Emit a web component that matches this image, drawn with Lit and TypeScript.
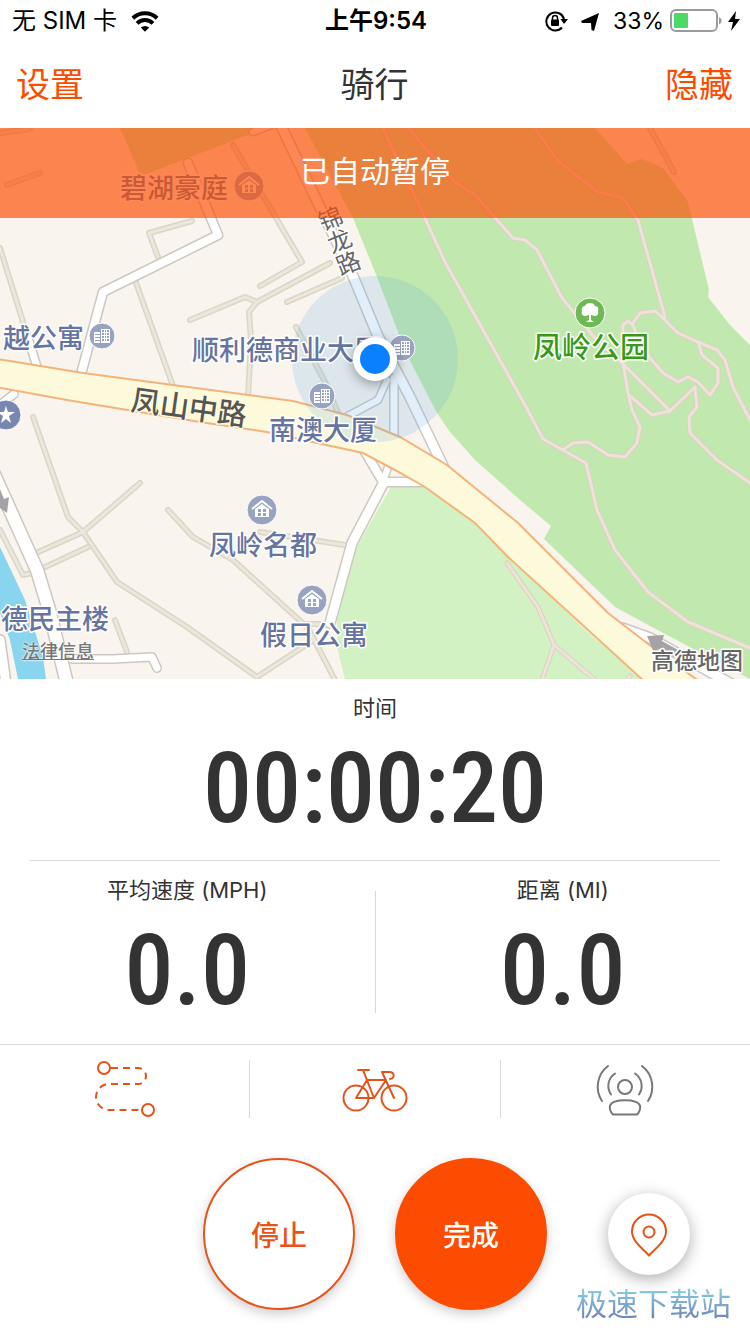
import { LitElement, html, svg, css } from "lit";
import { customElement } from "lit/decorators.js";

const sans = css`Inter, "Noto Sans CJK SC", sans-serif`;

const minorRoads = [
  "192,221 149,233 158,257",
  "135,280 173,386",
  "233,145 302,262 260,286",
  "190,320 245,297 257,302 330,263",
  "257,302 249,312 251,340 248,398",
  "287,302 342,278",
  "296,327 325,382 338,413",
  "40,173 7,185",
  "0,133 30,129",
  "0,248 28,338",
  "33,417 68,517 83,532 117,582 187,627 257,677",
  "140,483 83,532 36,553",
  "88,547 43,568",
  "168,510 193,537 233,560 308,628 335,680",
  "260,532 345,545",
  "115,620 127,652",
  "257,677 312,641",
  "0,530 23,575 36,572",
  "303,624 328,624",
  "650,128 674,172",
];

const whiteRoads = [
  { w: 11, p: "188,163 218,235 103,292 80,378" },
  { w: 12, p: "282,128 353,276 377,334 410,397 444,468" },
  { w: 9, p: "253,132 284,120" },
  { w: 10, p: "394,378 394,440" },
  { w: 9, p: "387,380 378,400 348,416" },
  { w: 11, p: "364,450 383,482 428,482" },
  { w: 9, p: "389,464 383,482" },
  { w: 12, p: "384,482 352,543 330,623" },
  { w: 15, p: "-8,470 37,570 50,613 67,684" },
  { w: 10, p: "28,338 38,370" },
  { w: 10, p: "72,659 113,659 152,657 157,668" },
  { w: 10, p: "0,405 14,394" },
  { w: 12, p: "0,640 6,684" },
  { w: 12, p: "622,628 650,638 735,686" },
];

const parkPaths = [
  "383,128 413,192 445,262 525,405 543,439 586,463 597,510 615,550 648,592 688,622 750,648",
  "408,128 455,182 475,195 513,238 525,240 537,250 562,298 595,338 622,363 670,411 695,387",
  "535,128 557,160 598,192 623,198 638,220 665,317",
  "633,323 640,313 655,311 665,320 678,333 698,342 717,350 725,360 733,387 750,420",
  "623,362 623,325 628,321 633,325 640,343 650,358 663,373 678,382 688,377 698,382 710,395 718,383 718,368 702,355 698,342",
  "623,362 628,393 632,410 640,427 637,443 625,457 608,455 588,442 573,443 563,450",
  "629,395 652,415 670,411",
  "695,387 697,407 689,417 690,433 717,460 750,483",
  "507,563 538,607 554,645 595,680",
  "554,645 542,680",
  "630,676 624,684",
];

const houses = [
  [249, 186],
  [262, 510],
  [312, 600],
];
const buildings = [
  [102, 336],
  [402, 348],
  [322, 396],
];

const labels = [
  { x: 3, y: 348, t: "越公寓" },
  { x: 120, y: 198, t: "碧湖豪庭" },
  { x: 192, y: 360, t: "顺利德商业大厦" },
  { x: 269, y: 440, t: "南澳大厦" },
  { x: 209, y: 555, t: "凤岭名都" },
  { x: 260, y: 645, t: "假日公寓" },
  { x: 1, y: 629, t: "德民主楼" },
];

const lines = (list: string[], cls: string) =>
  list.map((p) => svg`<polyline class=${cls} points=${p} />`);

@customElement("ride-map")
class RideMap extends LitElement {
  static styles = css`
    :host {
      display: block;
      position: relative;
    }
    svg {
      display: block;
      width: 100%;
      height: auto;
    }
    polyline {
      fill: none;
      stroke-linecap: round;
      stroke-linejoin: round;
    }
    .land { fill: #f9f4ed; }
    .park { fill: #c1e9af; }
    .lawn { fill: #d2f2c3; }
    .river { fill: #89d4ee; }
    .minor-edge { stroke: #dad6c6; stroke-width: 6; }
    .minor { stroke: #ebe8db; stroke-width: 3; }
    .casing { stroke: #cdc7c3; }
    .white { stroke: #fff; }
    .path-edge { stroke: #d9d3c0; stroke-width: 5; }
    .path { stroke: #efe2da; stroke-width: 3; }
    .main { fill: #fdfadb; stroke: #f3b47a; stroke-width: 2; }
    .arrow { fill: #a6a3a6; }
    .poi { fill: #98a3c1; stroke: #fff; stroke-width: 1; }
    .star { fill: #7787b0; }
    .tree { fill: #6fb955; }
    .glyph { fill: #fff; }
    .hole { fill: #98a3c1; }
    .roof { fill: none; stroke: #fff; stroke-width: 2; }
    .label {
      font: 500 27px ${sans};
      fill: #66759f;
      stroke: #fff;
      stroke-width: 3;
      stroke-linejoin: round;
      paint-order: stroke;
    }
    .green { font-size: 29px; fill: #3a9a18; }
    .road { font-size: 29px; fill: #555; stroke: #fdfadb; }
    .vertical { font-size: 24px; font-weight: 400; fill: #666; writing-mode: vertical-rl; }
    .brand { font-size: 23px; fill: #666; }
    .range { fill: #5aa5e6; fill-opacity: 0.18; }
    .dot-ring { fill: #fff; filter: drop-shadow(0 3px 6px rgba(0, 0, 0, 0.35)); }
    .dot { fill: #0a80ff; }
    .legal {
      position: absolute;
      left: 22px;
      bottom: 14px;
      font: 500 18px/26px ${sans};
      color: #777;
      text-decoration: underline;
      text-shadow: 0 0 2px #fff, 0 0 2px #fff;
    }
  `;

  render() {
    return html`
      <svg viewBox="0 128 750 551" role="img" aria-label="地图">
        <rect class="land" y="128" width="750" height="551" />
        <path class="park" d="M120 128 141 176 266 128Z" />
        <path class="park" d="M305 128 353 218 375 272 407 355 437 413 450 432 475 460 520 500 551 526 544 539 615 607 652 627 750 679V345L730 325 708 297 709 290 688 202 663 168 642 159 627 164 595 128Z" />
        <path class="lawn" d="M391 487H425L475 523 582 627 642 679H345L337 647V617L355 550Z" />
        <path class="river" d="M0 547 25 600 43 657 46 679H18L10 640 0 613Z" />
        ${lines(minorRoads, "minor-edge")} ${lines(minorRoads, "minor")}
        ${lines(parkPaths, "path-edge")} ${lines(parkPaths, "path")}
        ${whiteRoads.map((r) => svg`<polyline class="casing" stroke-width=${r.w} points=${r.p} />`)}
        ${whiteRoads.map((r) => svg`<polyline class="white" stroke-width=${r.w - 3} points=${r.p} />`)}
        <path class="main" d="M-4 359 10 361 83 373 173 385 293 401 347 415 400 437 447 465 518 523 608 613 652 647 700 682H645L508 557 475 523 425 487 395 470 363 453 267 432 200 422 67 400 -4 387Z" />
        <path class="arrow" d="M647 636 664 635 662 641 680 651 676 658 658 649 655 655Z" />
        <path class="arrow" d="M0 489 4 499 9 497 7 513 0 508Z" />
        <circle class="range" cx="375" cy="359" r="83" />

        ${labels.map((l) => svg`<text class="label" x=${l.x} y=${l.y}>${l.t}</text>`)}
        <text class="label green" x="533" y="358">凤岭公园</text>
        <text class="label road" transform="translate(130 410) rotate(8)">凤山中路</text>
        <text class="label vertical" transform="translate(324 208) rotate(-22)">锦龙路</text>
        <text class="label brand" x="651" y="669">高德地图</text>

        ${houses.map(
          ([x, y]) => svg`<g transform="translate(${x} ${y})">
            <circle class="poi" r="15" />
            <path class="roof" d="M-10 -1 0 -9 10 -1" />
            <path class="glyph" d="M-7 -1 0 -6 7 -1V7H-7Z" />
            <path class="hole" d="M-4 -1h3v3h-3zM1 -1h3v3h-3zM-4 3h3v3h-3zM1 3h3v3h-3z" />
          </g>`
        )}
        ${buildings.map(
          ([x, y]) => svg`<g transform="translate(${x} ${y})">
            <circle class="poi" r="13" />
            <path class="glyph" d="M-8 -4H-1V-7H8V7H-8Z" />
            <path class="hole" d="M-7 -2h5v1h-5zM-7 1h5v1h-5zM-7 4h5v1h-5zM-2 -4h1v11h-1zM0 -6h2v2h-2zM3 -6h1v2h-1zM5 -6h2v2h-2zM0 -3h2v2h-2zM3 -3h1v2h-1zM5 -3h2v2h-2zM0 0h2v2h-2zM3 0h1v2h-1zM5 0h2v2h-2zM0 3h2v2h-2zM3 3h1v2h-1zM5 3h2v2h-2z" />
          </g>`
        )}
        <circle class="poi star" cx="6" cy="415" r="15" />
        <path class="glyph" d="M6 406 8 412H15L9 416 11 423 6 419 1 423 3 416 -3 412H4Z" />
        <circle class="poi tree" cx="590" cy="313" r="15" />
        <path class="glyph" d="M590 303c3 0 4 1 5 3 3 0 4 3 3 5 1 3-1 5-3 5l-4-1v5l3 2h-8l3-2v-5l-4 1c-3 0-4-3-3-5-1-3 1-5 3-5 1-2 2-3 5-3z" />
        <circle class="dot-ring" cx="375" cy="359" r="22" />
        <circle class="dot" cx="375" cy="359" r="15" />
      </svg>
      <a class="legal" href="#legal">法律信息</a>
    `;
  }
}

@customElement("app-root")
class AppRoot extends LitElement {
  static styles = css`
    :host {
      display: flex;
      flex-direction: column;
      min-height: 100vh;
      background: #fff;
      color: #333;
      font-family: ${sans};
    }
    svg { display: block; }
    button {
      font: inherit;
      color: inherit;
      background: none;
      border: 0;
      padding: 0;
      margin: 0;
      cursor: pointer;
    }
    .status {
      display: grid;
      grid-template-columns: 1fr auto 1fr;
      align-items: center;
      height: 42px;
      padding: 0 10px 0 12px;
      color: #000;
      font-size: 24px;
      line-height: 32px;
    }
    .carrier, .indicators { display: flex; align-items: center; }
    .carrier { gap: 14px; }
    .indicators { justify-content: flex-end; gap: 6px; font-size: 23px; }
    .rotation { margin-right: 7px; }
    .gps { margin-right: 7px; }
    .clock { font-weight: 600; }
    .nav {
      display: grid;
      grid-template-columns: 1fr auto 1fr;
      align-items: center;
      height: 86px;
      padding: 0 17px 0 16px;
      font-size: 34px;
      line-height: 48px;
    }
    .nav h1 { margin: 0; font: inherit; }
    .nav button { color: #fc4c02; justify-self: start; }
    .nav .hide { justify-self: end; }
    .map-area { position: relative; overflow: hidden; }
    .banner {
      position: absolute;
      inset: 0 0 auto 0;
      display: flex;
      justify-content: center;
      padding: 21px 0 25px;
      background: rgba(252, 76, 2, 0.67);
      color: #fff;
      font-size: 30px;
      line-height: 44px;
    }
    .metric {
      display: flex;
      flex-direction: column;
      align-items: center;
      gap: 10px;
      padding: 13px 0 16px;
    }
    .name { font-size: 22px; line-height: 32px; }
    .value {
      font: 500 98px/110px "Roboto Condensed", Roboto, sans-serif;
    }
    .time { margin: 0 30px; border-bottom: 1px solid #d8d8d8; }
    .pair {
      display: grid;
      grid-template-columns: 1fr 1px 1fr;
      padding-bottom: 2px;
      border-bottom: 1px solid #d8d8d8;
    }
    .pair .rule { margin: 30px 0 29px; background: #d8d8d8; }
    .tools {
      display: grid;
      grid-template-columns: 1fr 1px 1fr 1px 1fr;
      padding: 15px 0 12px;
    }
    .tools .rule { background: #d8d8d8; }
    .tools button {
      display: flex;
      justify-content: center;
      align-items: center;
      height: 58px;
    }
    .line {
      fill: none;
      stroke: #e4531a;
      stroke-width: 2;
      stroke-linecap: round;
      stroke-linejoin: round;
    }
    .gray { stroke: #77787b; }
    .dash { stroke-dasharray: 7 5; stroke-linecap: butt; }
    .actions {
      position: relative;
      display: grid;
      grid-template-columns: 1fr auto 1fr;
      align-items: center;
      padding: 28px 60px 24px;
    }
    .main-actions { grid-column: 2; display: flex; gap: 40px; }
    .round {
      width: 152px;
      height: 152px;
      border-radius: 50%;
      border: 2px solid #e9531b;
      font-size: 28px;
      font-weight: 500;
      color: #e9531b;
      background: #fff;
      box-shadow: 0 4px 12px rgba(0, 0, 0, 0.2);
    }
    .finish { background: #fc4c02; border-color: #fc4c02; color: #fff; }
    .locate {
      justify-self: end;
      display: flex;
      align-items: center;
      justify-content: center;
      width: 82px;
      height: 82px;
      border-radius: 50%;
      background: #fff;
      box-shadow: 0 4px 16px rgba(0, 0, 0, 0.32);
    }
    .site {
      position: absolute;
      right: 19px;
      bottom: 8px;
      font-size: 31px;
      line-height: 44px;
      color: transparent;
      background: linear-gradient(#86c8e2 20%, #7189bb 80%);
      background-clip: text;
      -webkit-background-clip: text;
    }
  `;

  metric(name: string, value: string) {
    return html`<div class="metric">
      <span class="name">${name}</span>
      <span class="value">${value}</span>
    </div>`;
  }

  render() {
    return html`
      <div class="status">
        <div class="carrier">
          <span>无 SIM 卡</span>
          <svg width="28" height="21" viewBox="0 0 30 22">
            <path d="M15 22 10.500 17.500a6.500 6.500 0 0 1 9 0Z" />
            <path d="M6.500 13a12 12 0 0 1 17 0M2 7.500a18.500 18.500 0 0 1 26 0" fill="none" stroke="#000" stroke-width="4.200" />
          </svg>
        </div>
        <span class="clock">上午9:54</span>
        <div class="indicators">
          <svg class="rotation" width="23" height="22" viewBox="0 0 23 22">
            <path d="M17 17.500A9 9 0 1 1 19 9" fill="none" stroke="#000" stroke-width="2" />
            <path d="M15.500 9H23L19 14Z" />
            <rect x="6" y="9.500" width="8" height="6.500" rx="1" />
            <path d="M7.500 10V8a2.500 2.500 0 0 1 5 0v2" fill="none" stroke="#000" stroke-width="1.500" />
          </svg>
          <svg class="gps" width="19" height="19" viewBox="0 0 19 19">
            <path d="M18 1 13 19 10.500 18 10 11 1 11 0 9Z" />
          </svg>
          <span>33%</span>
          <svg width="52" height="24" viewBox="0 0 52 24">
            <rect x="1" y="1" width="46" height="21" rx="5" fill="none" stroke="#9b9b9b" stroke-width="2" />
            <rect x="4" y="4" width="14" height="15" rx="1" fill="#4cd964" />
            <path d="M49 8a4 4 0 0 1 0 7.500Z" fill="#9b9b9b" />
          </svg>
          <svg width="12" height="20" viewBox="0 0 12 20">
            <path d="M8 0 0 11H5L3 20 12 8H7Z" />
          </svg>
        </div>
      </div>

      <header class="nav">
        <button>设置</button>
        <h1>骑行</h1>
        <button class="hide">隐藏</button>
      </header>

      <div class="map-area">
        <ride-map></ride-map>
        <div class="banner" role="status">已自动暂停</div>
      </div>

      <div class="time">${this.metric("时间", "00:00:20")}</div>
      <div class="pair">
        ${this.metric("平均速度 (MPH)", "0.0")}
        <span class="rule"></span>
        ${this.metric("距离 (MI)", "0.0")}
      </div>

      <div class="tools">
        <button aria-label="路线">
          <svg width="64" height="58" viewBox="93 1060 64 58">
            <circle class="line" cx="104" cy="1068" r="6" />
            <circle class="line" cx="148" cy="1110" r="6" />
            <path class="line dash" d="M111 1068H138a8 8 0 0 1 0 16H109a13 13 0 0 0 0 26H142" />
          </svg>
        </button>
        <span class="rule"></span>
        <button aria-label="骑行">
          <svg width="68" height="58" viewBox="341 1060 68 58">
            <circle class="line" cx="356" cy="1098" r="12.500" />
            <circle class="line" cx="394" cy="1098" r="12.500" />
            <path class="line" d="M358 1070H369M363 1070 374 1098H356L367 1080H386M374 1098 386 1080M394 1098 382 1072H389c6 0 6 6 1 7" />
          </svg>
        </button>
        <span class="rule"></span>
        <button aria-label="信标">
          <svg width="60" height="58" viewBox="595 1060 60 58">
            <circle class="line gray" cx="625" cy="1087" r="7" />
            <path class="line gray" d="M613 1114.500H637q4-4 3-9c-3-7-27-7-30 0q-1 5 3 9zM615 1073.500a15 15 0 0 0-4 21M635 1073.500a15 15 0 0 1 4 21M608 1066a26 26 0 0 0-6 35M642 1066a26 26 0 0 1 6 35" />
          </svg>
        </button>
      </div>

      <div class="actions">
        <div class="main-actions">
          <button class="round">停止</button>
          <button class="round finish">完成</button>
        </div>
        <button class="locate" aria-label="定位">
          <svg width="40" height="46" viewBox="629 1211 40 46">
            <path class="line" d="M649 1255.500c-5-6-17-14-17-24a17 17 0 0 1 34 0c0 10-12 18-17 24z" />
            <circle class="line" cx="649" cy="1232" r="5.500" />
          </svg>
        </button>
        <span class="site">极速下载站</span>
      </div>
    `;
  }
}
